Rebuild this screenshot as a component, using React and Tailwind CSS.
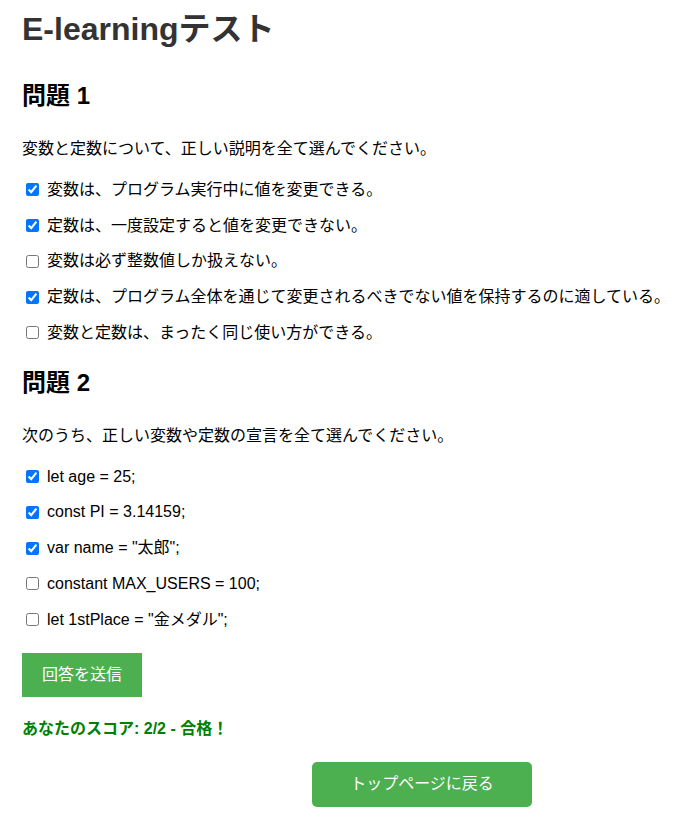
import React from "react";

const q1 = [
  { t: "変数は、プログラム実行中に値を変更できる。", c: true },
  { t: "定数は、一度設定すると値を変更できない。", c: true },
  { t: "変数は必ず整数値しか扱えない。", c: false },
  { t: "定数は、プログラム全体を通じて変更されるべきでない値を保持するのに適している。", c: true },
  { t: "変数と定数は、まったく同じ使い方ができる。", c: false },
];

const q2 = [
  { t: "let age = 25;", c: true },
  { t: "const PI = 3.14159;", c: true },
  { t: 'var name = "太郎";', c: true },
  { t: "constant MAX_USERS = 100;", c: false },
  { t: 'let 1stPlace = "金メダル";', c: false },
];

function Options({ items }) {
  return (
    <div className="flex flex-col">
      {items.map((o, i) => (
        <label key={i} className="flex h-[35.75px] items-center whitespace-nowrap text-[16px] text-black">
          <input
            type="checkbox"
            defaultChecked={o.c}
            className="ml-[4px] mr-[8px] h-[13px] w-[13px] shrink-0"
          />
          <span>{o.t}</span>
        </label>
      ))}
    </div>
  );
}

export default function App() {
  return (
    <div
      className="min-h-[830px] bg-white pl-[22px] pr-[18px] text-black"
      style={{ fontFamily: '"Liberation Sans", Arial, "Noto Sans CJK JP", sans-serif' }}
    >
      <h1 className="pt-[11px] text-[32px] font-bold leading-[37px] text-[#333]">E-learningテスト</h1>

      <h2 className="mt-[34px] text-[24px] font-bold leading-[28px] text-black">問題 1</h2>
      <p className="mt-[29px] text-[16px] leading-[20px]">変数と定数について、正しい説明を全て選んでください。</p>
      <div className="mt-[13px]">
        <Options items={q1} />
      </div>

      <h2 className="mt-[18px] text-[24px] font-bold leading-[28px] text-black">問題 2</h2>
      <p className="mt-[29px] text-[16px] leading-[20px]">次のうち、正しい変数や定数の宣言を全て選んでください。</p>
      <div className="mt-[13px]">
        <Options items={q2} />
      </div>

      <button className="mt-[15px] h-[44px] w-[120px] bg-[#4caf50] text-[16px] text-white">
        回答を送信
      </button>

      <p className="mt-[22px] text-[16px] font-bold leading-[20px] text-[#008000]">
        あなたのスコア: 2/2 - 合格！
      </p>

      <button className="ml-[290px] mt-[23px] h-[45px] w-[220px] rounded-[5px] bg-[#4caf50] text-[16px] text-white">
        トップページに戻る
      </button>
    </div>
  );
}
